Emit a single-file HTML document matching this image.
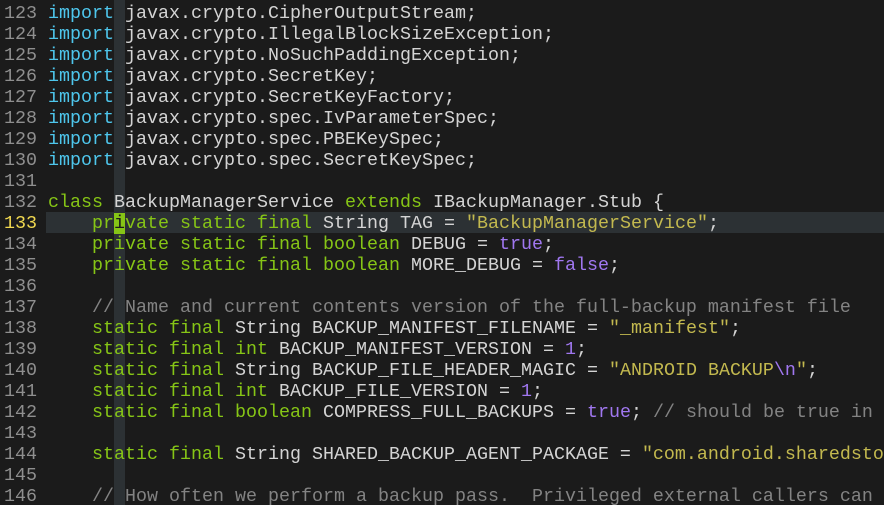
<!DOCTYPE html>
<html><head><meta charset="utf-8"><style>
html,body{margin:0;padding:0;background:#1b1b1b;width:884px;height:505px;overflow:hidden}
.w{position:relative;width:884px;height:505px;font-family:"Liberation Mono",monospace;font-size:18.33px;line-height:21px;color:#d4d4d4}
.col{position:absolute;left:114px;top:0;width:11px;height:505px;background:#2c3134}
.cur{position:absolute;left:46px;top:212px;width:838px;height:21px;background:#2c3134}
.l{position:absolute;left:0;height:21px;white-space:pre;margin-top:1px}
.n{display:inline-block;width:37px;text-align:right;color:#8f8f8f;margin-right:11px}
.y{color:#f0d850}
.i{color:#4ec6ec}.k{color:#86c516}.s{color:#c3b94f}.p{color:#a077f0}.c{color:#838383}
.cb{background:#86c516;color:#1b1b1b}
</style></head><body><div class="w">
<div class="col"></div><div class="cur"></div>
<div class="l" style="top:2px"><span class="n">123</span><span class="i">import</span> javax.crypto.CipherOutputStream;</div>
<div class="l" style="top:23px"><span class="n">124</span><span class="i">import</span> javax.crypto.IllegalBlockSizeException;</div>
<div class="l" style="top:44px"><span class="n">125</span><span class="i">import</span> javax.crypto.NoSuchPaddingException;</div>
<div class="l" style="top:65px"><span class="n">126</span><span class="i">import</span> javax.crypto.SecretKey;</div>
<div class="l" style="top:86px"><span class="n">127</span><span class="i">import</span> javax.crypto.SecretKeyFactory;</div>
<div class="l" style="top:107px"><span class="n">128</span><span class="i">import</span> javax.crypto.spec.IvParameterSpec;</div>
<div class="l" style="top:128px"><span class="n">129</span><span class="i">import</span> javax.crypto.spec.PBEKeySpec;</div>
<div class="l" style="top:149px"><span class="n">130</span><span class="i">import</span> javax.crypto.spec.SecretKeySpec;</div>
<div class="l" style="top:170px"><span class="n">131</span></div>
<div class="l" style="top:191px"><span class="n">132</span><span class="k">class</span> BackupManagerService <span class="k">extends</span> IBackupManager.Stub {</div>
<div class="l" style="top:212px"><span class="n y">133</span>    <span class="k">pr</span><span class="cb">i</span><span class="k">vate static final</span> String TAG = <span class="s">"BackupManagerService"</span>;</div>
<div class="l" style="top:233px"><span class="n">134</span>    <span class="k">private static final boolean</span> DEBUG = <span class="p">true</span>;</div>
<div class="l" style="top:254px"><span class="n">135</span>    <span class="k">private static final boolean</span> MORE_DEBUG = <span class="p">false</span>;</div>
<div class="l" style="top:275px"><span class="n">136</span></div>
<div class="l" style="top:296px"><span class="n">137</span>    <span class="c">// Name and current contents version of the full-backup manifest file</span></div>
<div class="l" style="top:317px"><span class="n">138</span>    <span class="k">static final</span> String BACKUP_MANIFEST_FILENAME = <span class="s">"_manifest"</span>;</div>
<div class="l" style="top:338px"><span class="n">139</span>    <span class="k">static final int</span> BACKUP_MANIFEST_VERSION = <span class="p">1</span>;</div>
<div class="l" style="top:359px"><span class="n">140</span>    <span class="k">static final</span> String BACKUP_FILE_HEADER_MAGIC = <span class="s">"ANDROID BACKUP</span><span class="p">\n</span><span class="s">"</span>;</div>
<div class="l" style="top:380px"><span class="n">141</span>    <span class="k">static final int</span> BACKUP_FILE_VERSION = <span class="p">1</span>;</div>
<div class="l" style="top:401px"><span class="n">142</span>    <span class="k">static final boolean</span> COMPRESS_FULL_BACKUPS = <span class="p">true</span>; <span class="c">// should be true in</span></div>
<div class="l" style="top:422px"><span class="n">143</span></div>
<div class="l" style="top:443px"><span class="n">144</span>    <span class="k">static final</span> String SHARED_BACKUP_AGENT_PACKAGE = <span class="s">"com.android.sharedsto</span></div>
<div class="l" style="top:464px"><span class="n">145</span></div>
<div class="l" style="top:485px"><span class="n">146</span>    <span class="c">// How often we perform a backup pass.  Privileged external callers can</span></div>
</div></body></html>
